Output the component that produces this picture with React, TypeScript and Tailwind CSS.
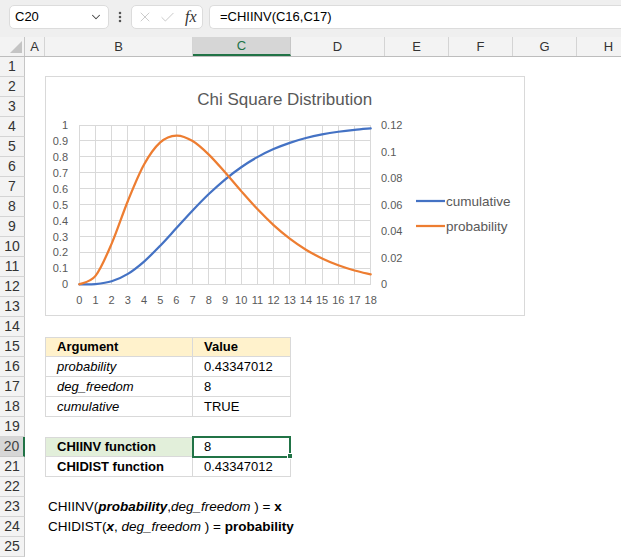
import type { FC, ReactNode } from "react";
import { Check, ChevronDown, EllipsisVertical, X } from "lucide-react";

// column widths after the row header: A..H
const colHeads: { label: string; w: string }[] = [
  { label: "A", w: "w-[20px]" },
  { label: "B", w: "w-[148px]" },
  { label: "C", w: "w-[98px]" },
  { label: "D", w: "w-[94px]" },
  { label: "E", w: "w-[64px]" },
  { label: "F", w: "w-[64px]" },
  { label: "G", w: "w-[64px]" },
  { label: "H", w: "w-[64px]" },
];

/* ---------- chart maths ---------- */
const pdf = (x: number) => (x ** 3 * Math.exp(-x / 2)) / 96;
const cdf = (x: number) => {
  const h = x / 2;
  return 1 - Math.exp(-h) * (1 + h + (h * h) / 2 + (h * h * h) / 6);
};

const X0 = 34.3;
const X1 = 325.7;
const YT = 49;
const YB = 208.3;
const xs = (v: number) => X0 + (v * (X1 - X0)) / 18;
const ys = (f: number) => YB - f * (YB - YT);

// smoothed line through integer points, the way the spreadsheet draws it
const smooth = (pts: [number, number][]) => {
  let d = `M${pts[0][0].toFixed(2)},${pts[0][1].toFixed(2)}`;
  for (let i = 0; i < pts.length - 1; i++) {
    const p0 = pts[Math.max(i - 1, 0)];
    const p1 = pts[i];
    const p2 = pts[i + 1];
    const p3 = pts[Math.min(i + 2, pts.length - 1)];
    const c1x = p1[0] + (p2[0] - p0[0]) / 6;
    const c1y = p1[1] + (p2[1] - p0[1]) / 6;
    const c2x = p2[0] - (p3[0] - p1[0]) / 6;
    const c2y = p2[1] - (p3[1] - p1[1]) / 6;
    d += ` C${c1x.toFixed(2)},${c1y.toFixed(2)} ${c2x.toFixed(2)},${c2y.toFixed(2)} ${p2[0].toFixed(2)},${p2[1].toFixed(2)}`;
  }
  return d;
};

const ints = Array.from({ length: 19 }, (_, i) => i);
const cumPath = smooth(ints.map((i) => [xs(i), ys(cdf(i))]));
const probPath = smooth(ints.map((i) => [xs(i), ys(pdf(i) / 0.12)]));

const Chart: FC = () => (
  <div className="absolute left-[45px] top-[76px] w-[480px] h-[240px] bg-white border border-[#d9d9d9]">
    <svg width={478} height={238} className="overflow-visible" fontFamily="'Liberation Sans', Arial, sans-serif">
      <g transform="translate(-1,-1)">
        <text x={239.7} y={29} textAnchor="middle" fontSize={17} fill="#595959">
          Chi Square Distribution
        </text>

        {/* grid */}
        <g stroke="#d9d9d9" strokeWidth={1} shapeRendering="crispEdges">
          {ints.map((i) => (
            <line key={`v${i}`} x1={xs(i)} x2={xs(i)} y1={YT} y2={YB} />
          ))}
          {Array.from({ length: 11 }, (_, i) => (
            <line key={`h${i}`} x1={X0} x2={X1} y1={ys(i / 10)} y2={ys(i / 10)} />
          ))}
        </g>

        {/* axes labels */}
        <g fontSize={11} fill="#595959">
          {Array.from({ length: 11 }, (_, i) => (
            <text key={`l${i}`} x={23} y={ys(i / 10) + 4} textAnchor="end">
              {i === 10 ? "1" : i === 0 ? "0" : `0.${i}`}
            </text>
          ))}
          {Array.from({ length: 7 }, (_, i) => (
            <text key={`r${i}`} x={336} y={ys(i / 6) + 4}>
              {i === 0 ? "0" : i === 5 ? "0.1" : `0.${String(i * 2).padStart(2, "0")}`}
            </text>
          ))}
          {ints.map((i) => (
            <text key={`x${i}`} x={xs(i)} y={228} textAnchor="middle">
              {i}
            </text>
          ))}
        </g>

        {/* series */}
        <path d={cumPath} fill="none" stroke="#4472c4" strokeWidth={2.25} strokeLinecap="round" />
        <path d={probPath} fill="none" stroke="#ed7d31" strokeWidth={2.25} strokeLinecap="round" />

        {/* legend */}
        <line x1={371} x2={400} y1={125} y2={125} stroke="#4472c4" strokeWidth={2.25} />
        <line x1={371} x2={400} y1={150} y2={150} stroke="#ed7d31" strokeWidth={2.25} />
        <g fontSize={13.5} fill="#595959">
          <text x={401} y={129.5}>cumulative</text>
          <text x={401} y={154.5}>probability</text>
        </g>
      </g>
    </svg>
  </div>
);

/* ---------- grid pieces ---------- */
const RowHead: FC<{ n: number; active?: boolean }> = ({ n, active }) => (
  <div
    className={
      active
        ? "w-[25px] shrink-0 flex items-center justify-center text-[14px] bg-[#d6d6d6] text-[#444] border-b border-[#c8c8c8] border-r-2 border-r-[#217346]"
        : "w-[25px] shrink-0 flex items-center justify-center text-[14px] bg-[#f3f3f3] text-[#333] border-b border-[#d4d4d4] border-r border-r-[#c6c6c6]"
    }
  >
    {n}
  </div>
);

const Row: FC<{ n: number; active?: boolean; children?: ReactNode }> = ({ n, active, children }) => (
  <div className="flex h-[20px] text-[13px]">
    <RowHead n={n} active={active} />
    <div className="w-[20px] shrink-0" />
    {children}
  </div>
);

type CellProps = {
  w: string;
  top?: boolean;
  left?: boolean;
  bg?: string;
  className?: string;
  children?: ReactNode;
};

const Cell: FC<CellProps> = ({ w, top, left, bg, className, children }) => (
  <div
    className={`${w} shrink-0 flex items-center pl-[11px] border-r border-b border-[#d9d9d9] whitespace-nowrap ${
      top ? "border-t" : ""
    } ${left ? "border-l" : ""} ${bg ?? ""} ${className ?? ""}`}
  >
    {children}
  </div>
);

const App: FC = () => {
  const plain = Array.from({ length: 25 }, (_, i) => i + 1);

  const content = (n: number): ReactNode => {
    switch (n) {
      case 15:
        return (
          <>
            <Cell w="w-[148px]" top left bg="bg-[#fff2cc]" className="font-bold">
              Argument
            </Cell>
            <Cell w="w-[98px]" top bg="bg-[#fff2cc]" className="font-bold">
              Value
            </Cell>
          </>
        );
      case 16:
        return (
          <>
            <Cell w="w-[148px]" left className="italic">
              probability
            </Cell>
            <Cell w="w-[98px]">0.43347012</Cell>
          </>
        );
      case 17:
        return (
          <>
            <Cell w="w-[148px]" left className="italic">
              deg_freedom
            </Cell>
            <Cell w="w-[98px]">8</Cell>
          </>
        );
      case 18:
        return (
          <>
            <Cell w="w-[148px]" left className="italic">
              cumulative
            </Cell>
            <Cell w="w-[98px]">TRUE</Cell>
          </>
        );
      case 20:
        return (
          <>
            <Cell w="w-[148px]" top left bg="bg-[#e2efda]" className="font-bold">
              CHIINV function
            </Cell>
            <Cell w="w-[98px]" top className="relative">
              8
              <div className="absolute -left-[1px] -top-[2px] w-[99px] h-[22px] border-2 border-[#217346]" />
              <div className="absolute -right-[3px] -bottom-[3px] w-[6px] h-[6px] bg-[#217346] border border-white" />
            </Cell>
          </>
        );
      case 21:
        return (
          <>
            <Cell w="w-[148px]" left className="font-bold">
              CHIDIST function
            </Cell>
            <Cell w="w-[98px]">0.43347012</Cell>
          </>
        );
      case 23:
        return (
          <div className="flex items-center pl-[3px] whitespace-nowrap text-[13.5px]">
            CHIINV(<b className="italic">probability</b>,<i>deg_freedom</i>&nbsp;) =&nbsp;<b>x</b>
          </div>
        );
      case 24:
        return (
          <div className="flex items-center pl-[3px] whitespace-nowrap text-[13.5px]">
            CHIDIST(<b className="italic">x</b>,&nbsp;<i>deg_freedom</i>&nbsp;) =&nbsp;<b>probability</b>
          </div>
        );
      default:
        return null;
    }
  };

  return (
    <div className="relative w-[621px] h-[557px] overflow-hidden bg-white text-black font-['Liberation_Sans',Arial,sans-serif]">
      {/* name box / formula bar */}
      <div className="h-[37px] flex items-start pt-[5px] pl-[9px] bg-[#efefef] text-[13px]">
        <div className="w-[100px] h-[24px] shrink-0 flex items-center justify-between pl-[5px] pr-[5px] bg-white border border-[#dcdcdc] rounded-[5px]">
          <span>C20</span>
          <ChevronDown size={14} strokeWidth={1.8} className="text-[#444]" />
        </div>
        <div className="w-[22px] h-[24px] shrink-0 flex items-center justify-center">
          <EllipsisVertical size={14} strokeWidth={2.4} className="text-[#555]" />
        </div>
        <div className="w-[72px] h-[24px] shrink-0 flex items-center bg-white border border-[#dcdcdc] rounded-[5px] pl-[5px] gap-[6px]">
          <X size={16} strokeWidth={1.3} className="text-[#c4c4c4]" />
          <Check size={17} strokeWidth={1.3} className="text-[#c4c4c4]" />
          <span className="font-['Liberation_Serif',serif] italic text-[16px] leading-none text-[#333] ml-[3px]">
            fx
          </span>
        </div>
        <div className="ml-[6px] flex-1 h-[24px] flex items-center pl-[10px] bg-white border border-[#dcdcdc] rounded-l-[5px] border-r-0">
          =CHIINV(C16,C17)
        </div>
      </div>

      {/* column headers */}
      <div className="flex h-[20px] bg-[#f3f3f3] text-[13px] text-[#333] border-b border-[#bdbdbd]">
        <div className="w-[25px] shrink-0 relative border-r border-[#c6c6c6]">
          <svg width={25} height={19} className="absolute left-0 top-0">
            <polygon points="10,16 22,16 22,4" fill="#c4c4c4" />
          </svg>
        </div>
        {colHeads.map((c) =>
          c.label === "C" ? (
            <div
              key={c.label}
              className={`${c.w} shrink-0 flex items-center justify-center bg-[#d6d6d6] text-[#217346] border-r border-[#c6c6c6] border-b-2 border-b-[#217346]`}
            >
              {c.label}
            </div>
          ) : (
            <div key={c.label} className={`${c.w} shrink-0 flex items-center justify-center border-r border-[#d4d4d4]`}>
              {c.label}
            </div>
          )
        )}
      </div>

      {/* rows */}
      {plain.map((n) => (
        <Row key={n} n={n} active={n === 20}>
          {content(n)}
        </Row>
      ))}

      <Chart />
    </div>
  );
};

export default App;
